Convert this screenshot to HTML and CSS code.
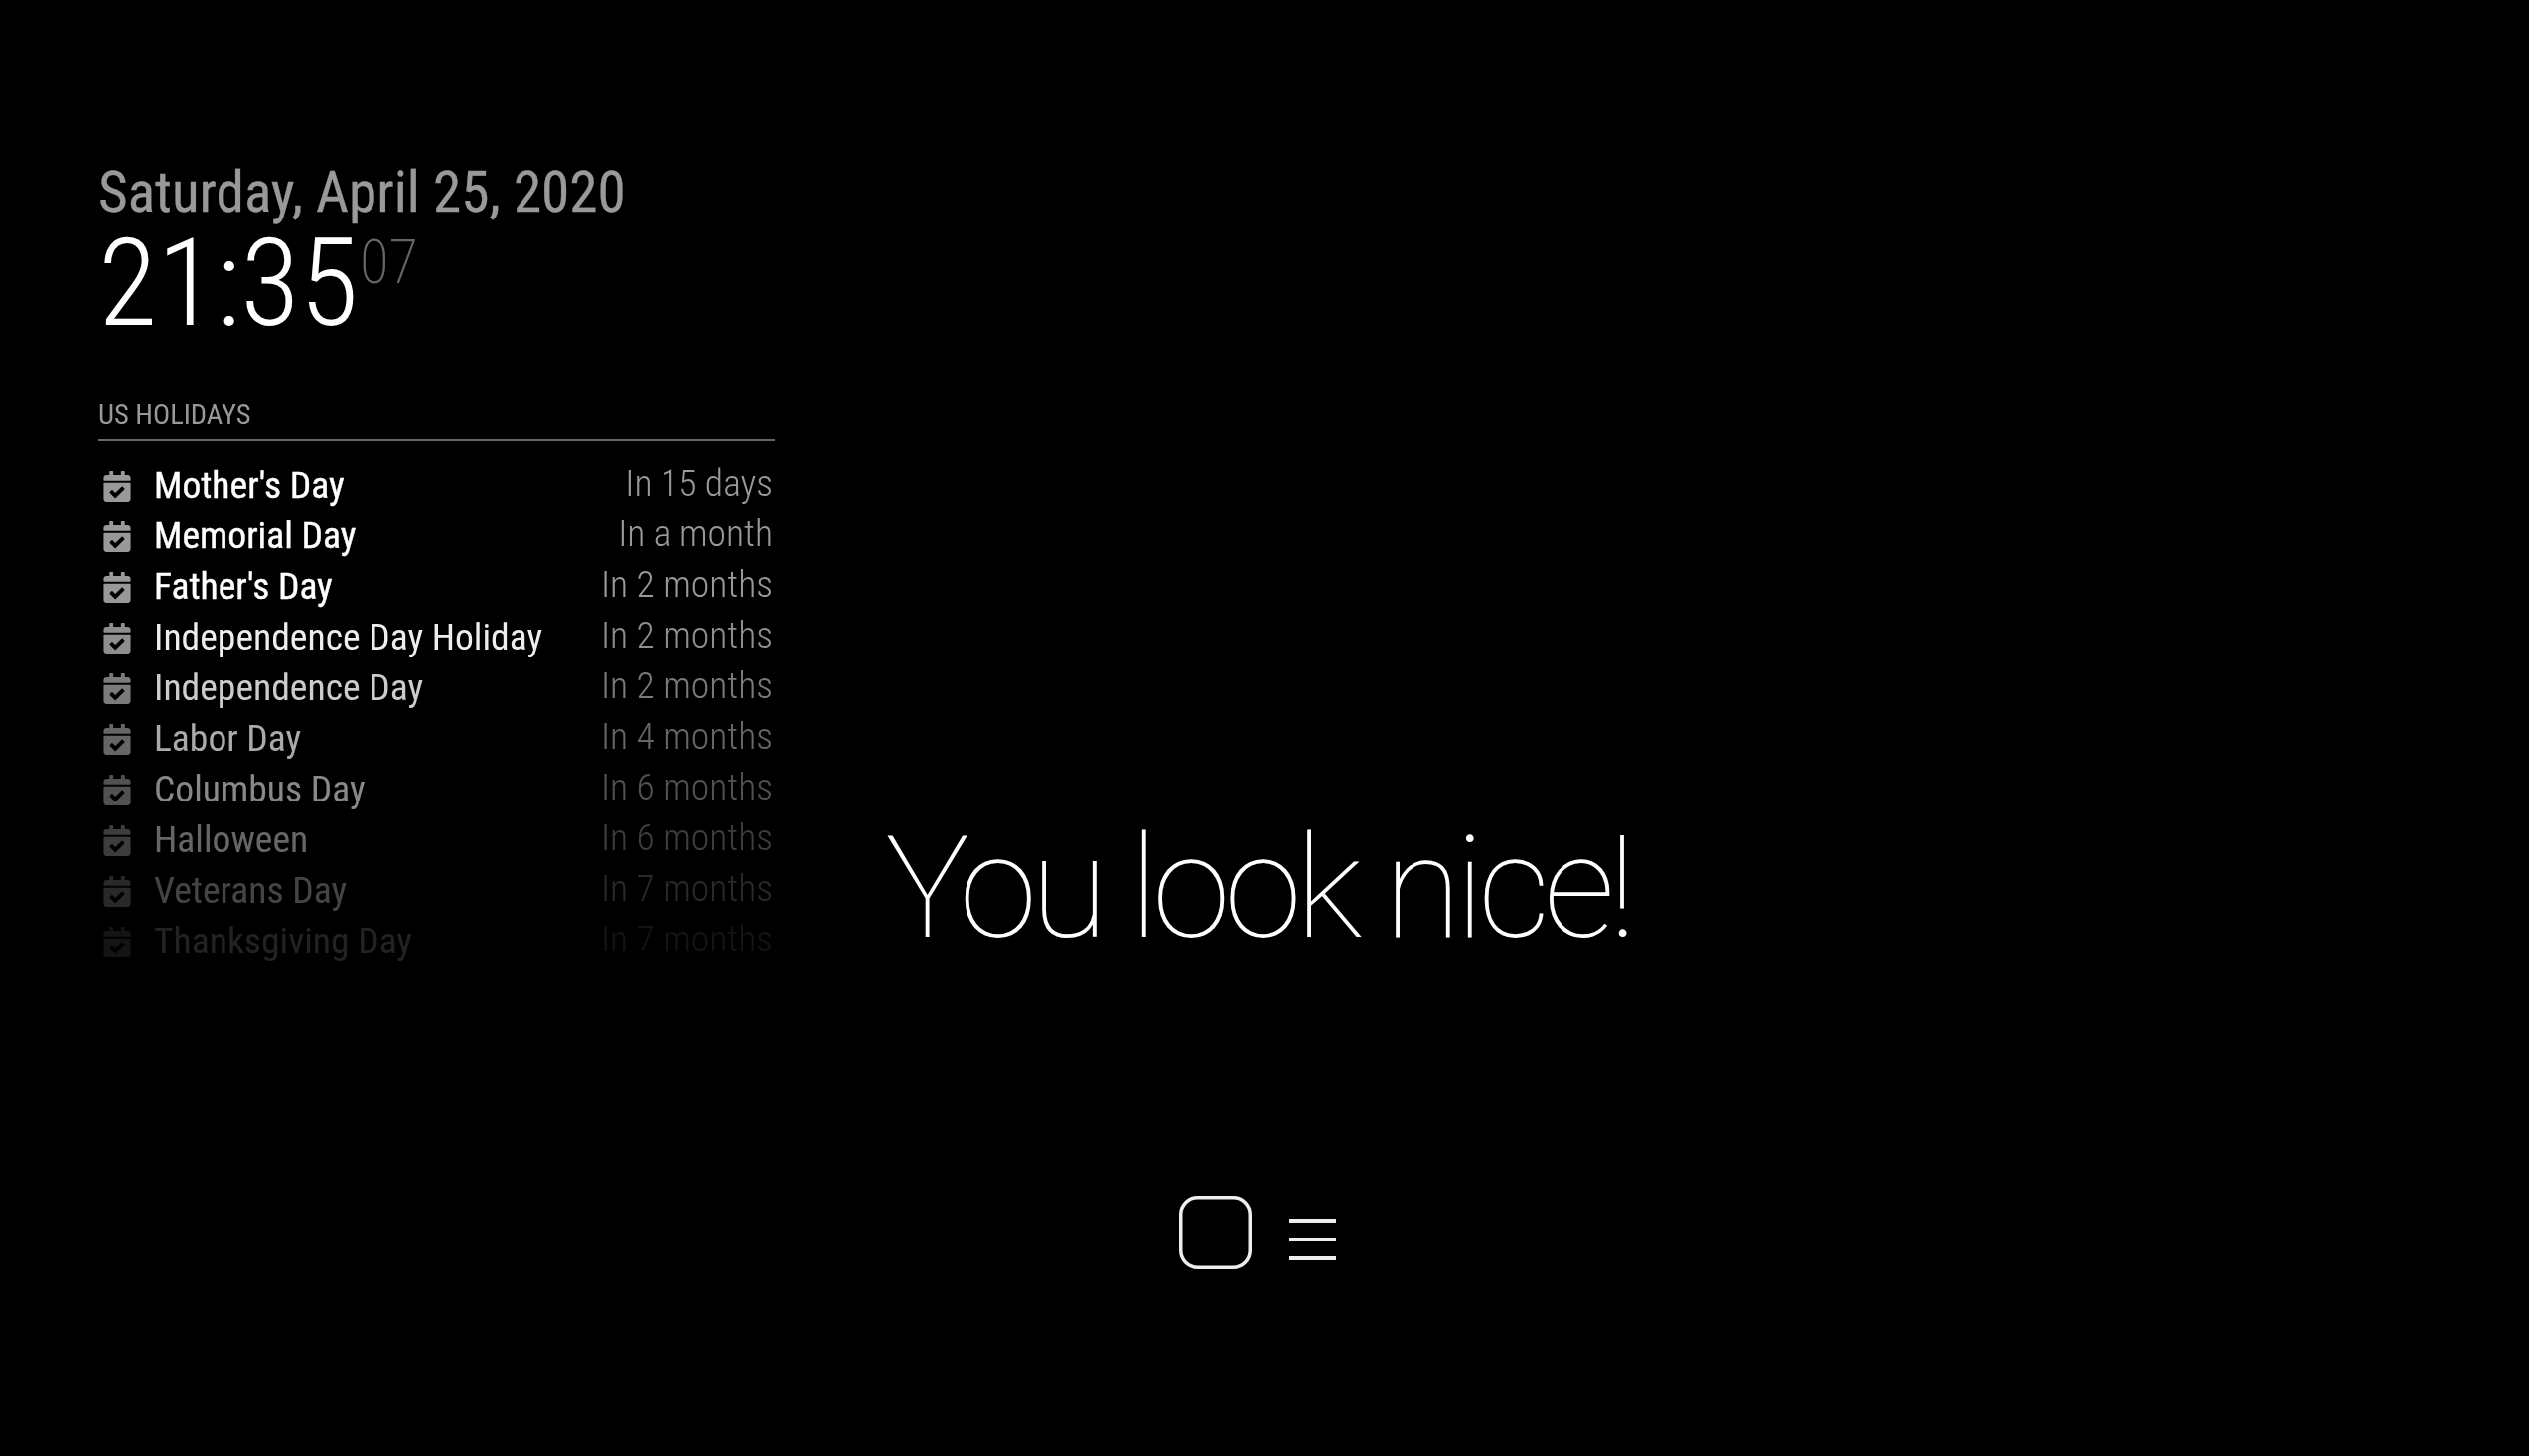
FILE: index.html
```html
<!DOCTYPE html>
<html lang="en">
<head>
<meta charset="utf-8">
<title>MagicMirror</title>
<link rel="stylesheet" href="styles.css">
</head>
<body>
<svg class="defs" aria-hidden="true"><symbol id="cal" viewBox="0 0 448 512"><path d="M436 160H12c-6.627 0-12-5.373-12-12v-36c0-26.51 21.49-48 48-48h48V12c0-6.627 5.373-12 12-12h40c6.627 0 12 5.373 12 12v52h128V12c0-6.627 5.373-12 12-12h40c6.627 0 12 5.373 12 12v52h48c26.51 0 48 21.49 48 48v36c0 6.627-5.373 12-12 12zM12 192h424c6.627 0 12 5.373 12 12v260c0 26.51-21.49 48-48 48H48c-26.51 0-48-21.49-48-48V204c0-6.627 5.373-12 12-12zm333.296 95.947l-28.169-28.398c-4.667-4.705-12.265-4.736-16.970-.068L194.12 364.665l-45.98-46.352c-4.667-4.705-12.266-4.736-16.971-.068l-28.397 28.170c-4.705 4.667-4.736 12.265-.068 16.970l82.601 83.269c4.667 4.705 12.265 4.736 16.970.068l142.953-141.805c4.705-4.667 4.736-12.265.068-16.970z"/></symbol></svg>
<main class="stage">
  <section class="left">
    <div class="date">Saturday, April 25, 2020</div>
    <div class="time">21:35<sup class="secs">07</sup></div>
    <header class="cal-head">US HOLIDAYS</header>
    <ul class="events">
      <li class="event"><svg class="ico"><use href="#cal"/></svg><span class="name">Mother's Day</span><span class="when">In 15 days</span></li>
      <li class="event"><svg class="ico"><use href="#cal"/></svg><span class="name">Memorial Day</span><span class="when">In a month</span></li>
      <li class="event"><svg class="ico"><use href="#cal"/></svg><span class="name">Father's Day</span><span class="when">In 2 months</span></li>
      <li class="event"><svg class="ico"><use href="#cal"/></svg><span class="name">Independence Day Holiday</span><span class="when">In 2 months</span></li>
      <li class="event"><svg class="ico"><use href="#cal"/></svg><span class="name">Independence Day</span><span class="when">In 2 months</span></li>
      <li class="event"><svg class="ico"><use href="#cal"/></svg><span class="name">Labor Day</span><span class="when">In 4 months</span></li>
      <li class="event"><svg class="ico"><use href="#cal"/></svg><span class="name">Columbus Day</span><span class="when">In 6 months</span></li>
      <li class="event"><svg class="ico"><use href="#cal"/></svg><span class="name">Halloween</span><span class="when">In 6 months</span></li>
      <li class="event"><svg class="ico"><use href="#cal"/></svg><span class="name">Veterans Day</span><span class="when">In 7 months</span></li>
      <li class="event"><svg class="ico"><use href="#cal"/></svg><span class="name">Thanksgiving Day</span><span class="when">In 7 months</span></li>
    </ul>
  </section>
  <section class="center">
    <div class="compliment">You look nice!</div>
    <div class="marks">
      <svg class="mark-box" viewBox="0 0 73 74"><rect x="1.75" y="1.75" width="69.5" height="70.5" rx="17"/></svg>
      <svg class="mark-menu" viewBox="0 0 47 42"><path d="M0 2h47M0 21h47M0 40h47"/></svg>
    </div>
  </section>
</main>
</body>
</html>
```
FILE: styles.css
```css
* { box-sizing: border-box; }
html, body { margin: 0; height: 100%; background: #000; }
body { overflow: hidden; font-family: Roboto, "Liberation Sans", sans-serif; color: #aaa; }
.defs { display: none; }
.stage { display: grid; height: 1466px; filter: blur(.6px); }
.left, .center { grid-area: 1 / 1; }
.left { width: 780px; padding: 160px 0 0 99px; }
.date { font-size: 57.2px; line-height: 68px; color: #999; font-stretch: 75%; white-space: nowrap; -webkit-text-stroke: .3px #999; }
.time { padding-top: 2px; font-size: 122px; line-height: 112px; font-weight: 300; color: #fff; font-stretch: 75%; white-space: nowrap; }
.secs { margin-left: 1px; font-size: 61px; line-height: 1; font-weight: 200; color: #666; vertical-align: super; }
.cal-head { margin-top: 58px; padding-bottom: 6px; border-bottom: 2px solid #666; font-size: 28.5px; line-height: 36px; color: #999; font-stretch: 75%; }
.events { list-style: none; margin: 18px 0 0; padding: 0 2px 0 5px; }
.event { display: flex; align-items: center; height: 51px; font-stretch: 75%; }
.ico { width: 28px; height: 31px; margin: 3px 23px 0 0; fill: #999; flex: none; }
.name { flex: 1; font-size: 37.6px; color: #fff; white-space: nowrap; }
.event:nth-child(-n+3) .name { -webkit-text-stroke: .4px #fff; }
.when { margin-bottom: 3px; font-size: 37.5px; font-weight: 300; color: #999; white-space: nowrap; }
.event:nth-child(4) { opacity: .933; }
.event:nth-child(5) { opacity: .8; }
.event:nth-child(6) { opacity: .667; }
.event:nth-child(7) { opacity: .533; }
.event:nth-child(8) { opacity: .4; }
.event:nth-child(9) { opacity: .267; }
.event:nth-child(10) { opacity: .133; }
.center { justify-self: start; width: 2532px; display: flex; flex-direction: column; align-items: center; padding-top: 805px; }
.compliment { font-size: 142.5px; line-height: 180px; letter-spacing: -6.3px; font-weight: 100; color: #fff; white-space: nowrap; }
.marks { display: flex; align-items: flex-end; gap: 38px; margin-top: 219px; }
.mark-box { width: 73px; height: 74px; fill: none; stroke: #eee; stroke-width: 3.5; }
.mark-menu { width: 47px; height: 42px; margin-bottom: 9px; fill: none; stroke: #eee; stroke-width: 4; }
```
